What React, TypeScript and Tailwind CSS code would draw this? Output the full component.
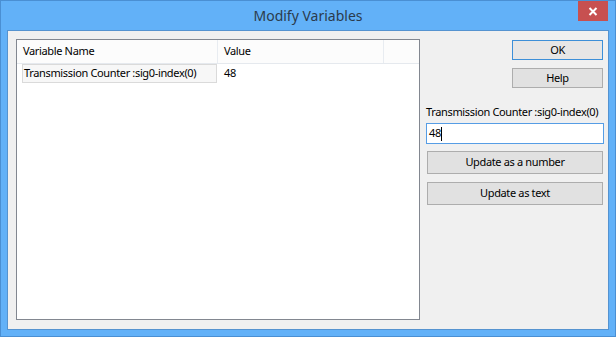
import React from "react";

const font = { fontFamily: '"Noto Sans", "Open Sans", sans-serif' };

export default function App() {
  return (
    <div
      className="w-[616px] h-[337px] border border-[#4a8fd3] bg-[#62b1f8] flex flex-col relative text-[11px] tracking-[-0.35px] text-black whitespace-nowrap"
      style={font}
    >
      <div className="h-[29px] flex items-center justify-center text-[14px] tracking-normal text-[#2b3b4d] pb-[1px]">
        Modify Variables
      </div>
      <div className="absolute right-[7px] top-0 w-[30px] h-[20px] bg-[#c75050] flex items-center justify-center">
        <svg width="10" height="9" viewBox="0 0 10 9">
          <path d="M1.5 1 L8.5 8 M8.5 1 L1.5 8" stroke="#fff" strokeWidth="2" />
        </svg>
      </div>
      <div className="mx-[6px] mb-[6px] flex-1 border border-[#5593d0] bg-[#f0f0f0] flex pl-[8px] pt-[8px]">
        <div className="w-[404px] h-[281px] border border-[#828790] bg-white flex flex-col">
          <div className="h-[24px] flex border-b border-[#e5e9ee] bg-[#fcfcfc]">
            <div className="w-[201px] border-r border-[#e8ecf1] pl-[6px] flex items-center">Variable Name</div>
            <div className="w-[166px] border-r border-[#e8ecf1] pl-[6px] flex items-center">Value</div>
            <div className="w-[33px]"></div>
          </div>
          <div className="h-[19px] flex items-center">
            <div className="ml-[5px] w-[195px] h-[19px] border border-[#dadada] bg-[#f7f7f7] pl-[1px] flex items-center">
              Transmission Counter :sig0-index(0)
            </div>
            <div className="ml-[7px]">48</div>
          </div>
        </div>
        <div className="ml-[6px] w-[178px] flex flex-col">
          <div className="mt-[1px] ml-[86px] w-[91px] h-[20px] border border-[#3c8fd8] bg-[#e6e6e6] flex items-center justify-center">
            OK
          </div>
          <div className="mt-[8px] ml-[86px] w-[91px] h-[20px] border border-[#adadad] bg-[#e1e1e1] flex items-center justify-center">
            Help
          </div>
          <div className="mt-[16px] h-[15px] leading-[15px]">Transmission Counter :sig0-index(0)</div>
          <div className="mt-[4px] w-[178px] h-[21px] border border-[#569de5] bg-white flex items-center pl-[2px]">
            <span>48</span>
            <span className="w-[1px] h-[14px] bg-black"></span>
          </div>
          <div className="mt-[7px] ml-[1px] w-[176px] h-[23px] border border-[#adadad] bg-[#e1e1e1] flex items-center justify-center">
            Update as a number
          </div>
          <div className="mt-[8px] ml-[1px] w-[176px] h-[23px] border border-[#adadad] bg-[#e1e1e1] flex items-center justify-center">
            Update as text
          </div>
        </div>
      </div>
    </div>
  );
}
